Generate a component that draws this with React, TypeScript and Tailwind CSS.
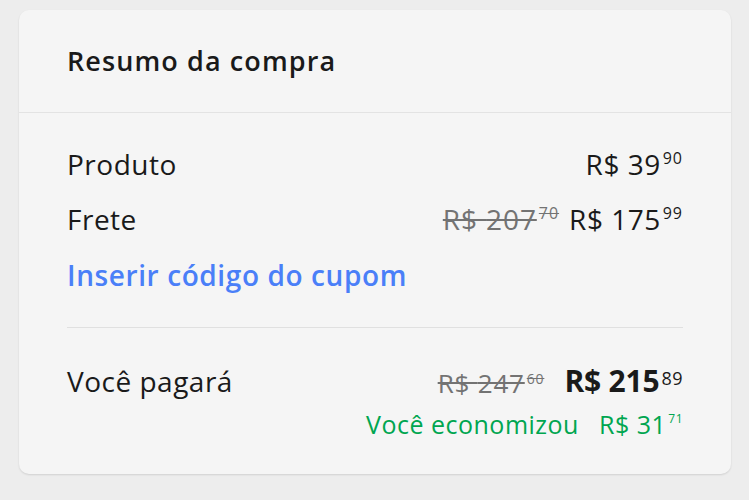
import React from 'react';

const font = { fontFamily: '"Open Sans", "Liberation Sans", sans-serif' };

interface PriceProps {
  value: string;
  cents: string;
  className?: string;
  centsClassName?: string;
  strike?: boolean;
}

const Price: React.FC<PriceProps> = ({ value, cents, className = '', centsClassName = '', strike = false }) => (
  <span className={`inline-flex items-start whitespace-nowrap ${strike ? 'line-through' : ''} ${className}`}>
    <span>R$ {value}</span>
    <span className={`ml-[2px] ${centsClassName}`}>{cents}</span>
  </span>
);

export default function App() {
  return (
    <div className="min-h-screen w-[749px] h-[500px] bg-[#ededed] pt-[10px] pl-[19px]" style={font}>
      <div className="w-[712px] h-[464px] rounded-[10px] bg-[#f5f5f5] shadow-[0_1px_2px_rgba(0,0,0,0.12)] flex flex-col">
        {/* header */}
        <div className="h-[103px] flex items-center px-12 border-b border-[#e3e3e3]">
          <h2 className="text-[27px] font-semibold text-[#1a1a1a] tracking-[1.1px]">Resumo da compra</h2>
        </div>

        <div className="px-12 pt-[33px] text-[#1a1a1a] tracking-[0.5px]">
          <div className="flex items-center justify-between h-9 text-[28px]">
            <span>Produto</span>
            <Price value="39" cents="90" centsClassName="text-[16px] mt-[3px] tracking-[1px]" />
          </div>
          <div className="flex items-center justify-between h-9 mt-[19px] text-[28px]">
            <span>Frete</span>
            <span className="flex items-start gap-[10px]">
              <Price value="207" cents="70" strike className="text-[#737373] tracking-[0.9px]" centsClassName="text-[16px] mt-[3px] tracking-[1px]" />
              <Price value="175" cents="99" centsClassName="text-[16px] mt-[3px] tracking-[1px]" />
            </span>
          </div>
          <div className="h-9 mt-[20px] flex items-center">
            <a className="text-[28px] font-semibold text-[#4a7ff8] tracking-[0.6px]">Inserir código do cupom</a>
          </div>

          <div className="border-t border-[#e0e0e0] mt-[34px]" />

          <div className="flex justify-between pt-[35px]">
            <span className="text-[28px] leading-9">Você pagará</span>
            <div className="flex flex-col items-end">
              <div className="flex items-start gap-[20px]">
                <Price value="247" cents="60" strike className="text-[26px] text-[#737373] mt-[1px] tracking-[0.8px]" centsClassName="text-[14px] mt-[4px]" />
                <Price value="215" cents="89" className="text-[30px] font-bold leading-9 tracking-[-0.2px]" centsClassName="text-[18px] leading-none mt-[6px] font-medium tracking-[0.5px]" />
              </div>
              <div className="flex items-start mt-[3px] text-[#00a650] text-[25px] tracking-[0.5px]">
                <span>Você economizou</span>
                <Price value="31" cents="71" className="ml-5" centsClassName="text-[12px] mt-[4px]" />
              </div>
            </div>
          </div>
        </div>
      </div>
    </div>
  );
}
